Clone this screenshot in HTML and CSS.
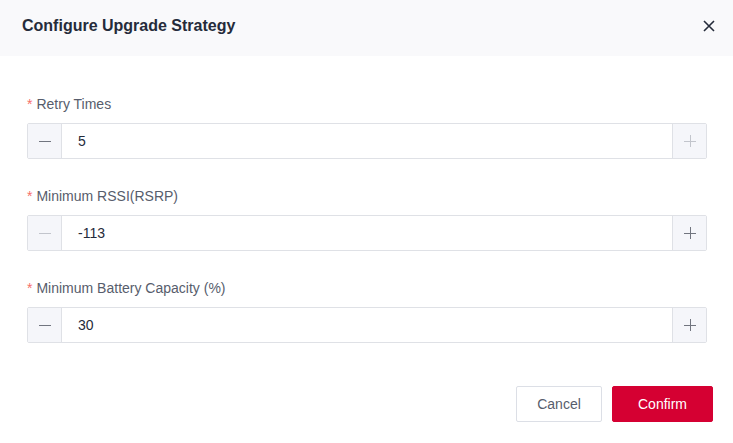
FILE: index.html
```html
<!DOCTYPE html>
<html>
<head>
<meta charset="utf-8">
<link rel="stylesheet" href="styles.css">
</head>
<body>
<div class="dialog">
  <div class="header">
    <div class="title">Configure Upgrade Strategy</div>
    <button class="close" aria-label="Close">
      <svg width="12" height="12" viewBox="0 0 12 12"><path d="M1 1L11 11M11 1L1 11" stroke="#252b3a" stroke-width="1.6" fill="none"/></svg>
    </button>
  </div>
  <div class="body">
    <div class="field">
      <label class="label"><span class="req">*</span>Retry Times</label>
      <div class="number">
        <span class="step"><svg width="12" height="12" viewBox="0 0 12 12"><path d="M0 6.5H12" stroke="#71757f" stroke-width="1"/></svg></span>
        <span class="value">5</span>
        <span class="step plus disabled"><svg width="12" height="12" viewBox="0 0 12 12"><path d="M0 6.5H12M6.5 0V12" stroke="#c2c5cc" stroke-width="1"/></svg></span>
      </div>
    </div>
    <div class="field">
      <label class="label"><span class="req">*</span>Minimum RSSI(RSRP)</label>
      <div class="number">
        <span class="step disabled"><svg width="12" height="12" viewBox="0 0 12 12"><path d="M0 6.5H12" stroke="#c2c5cc" stroke-width="1"/></svg></span>
        <span class="value">-113</span>
        <span class="step plus"><svg width="12" height="12" viewBox="0 0 12 12"><path d="M0 6.5H12M6.5 0V12" stroke="#71757f" stroke-width="1"/></svg></span>
      </div>
    </div>
    <div class="field">
      <label class="label"><span class="req">*</span>Minimum Battery Capacity (%)</label>
      <div class="number">
        <span class="step"><svg width="12" height="12" viewBox="0 0 12 12"><path d="M0 6.5H12" stroke="#71757f" stroke-width="1"/></svg></span>
        <span class="value">30</span>
        <span class="step plus"><svg width="12" height="12" viewBox="0 0 12 12"><path d="M0 6.5H12M6.5 0V12" stroke="#71757f" stroke-width="1"/></svg></span>
      </div>
    </div>
  </div>
  <div class="footer">
    <button class="btn cancel">Cancel</button>
    <button class="btn confirm">Confirm</button>
  </div>
</div>
</body>
</html>
```
FILE: styles.css
```css
* { box-sizing: border-box; }
html, body { margin: 0; padding: 0; background: #fff; }
body { font-family: "Liberation Sans", Arial, sans-serif; color: #252b3a; }
.dialog { width: 733px; height: 443px; background: #fff; display: flex; flex-direction: column; }
.header {
  height: 56px; background: #f9f9fb; display: flex; align-items: center;
  justify-content: space-between; padding: 0 17px 4px 22px;
}
.title { font-size: 16px; font-weight: bold; color: #252b3a; line-height: 22px; }
.close { border: 0; background: transparent; padding: 0; width: 14px; height: 14px; display: flex; align-items: center; justify-content: center; cursor: pointer; }
.body { padding: 37px 27px 0 27px; display: flex; flex-direction: column; gap: 26px; }
.field { display: flex; flex-direction: column; gap: 9px; }
.label { font-size: 14px; line-height: 20px; padding-top: 1px; color: #575d6c; }
.req { color: #f66f6a; margin-right: 4px; }
.number {
  width: 680px; height: 36px; border: 1px solid #dfe1e6; border-radius: 2px;
  display: flex; align-items: stretch; background: #fff;
}
.step { width: 34px; background: #f5f6fa; display: flex; align-items: center; justify-content: center; border-right: 1px solid #dfe1e6; }
.step.plus { border-right: 0; border-left: 1px solid #dfe1e6; }
.value { flex: 1; padding-left: 16px; font-size: 14px; line-height: 34px; color: #252b3a; }
.footer { display: flex; justify-content: flex-end; gap: 10px; padding: 43px 20px 0 0; }
.btn { height: 36px; font-family: "Liberation Sans", Arial, sans-serif; font-size: 14px; border-radius: 2px; cursor: pointer; }
.cancel { width: 86px; background: #fff; border: 1px solid #dcdfe6; color: #575d6c; }
.confirm { width: 101px; background: #d50032; border: 1px solid #d50032; color: #fff; }
```
